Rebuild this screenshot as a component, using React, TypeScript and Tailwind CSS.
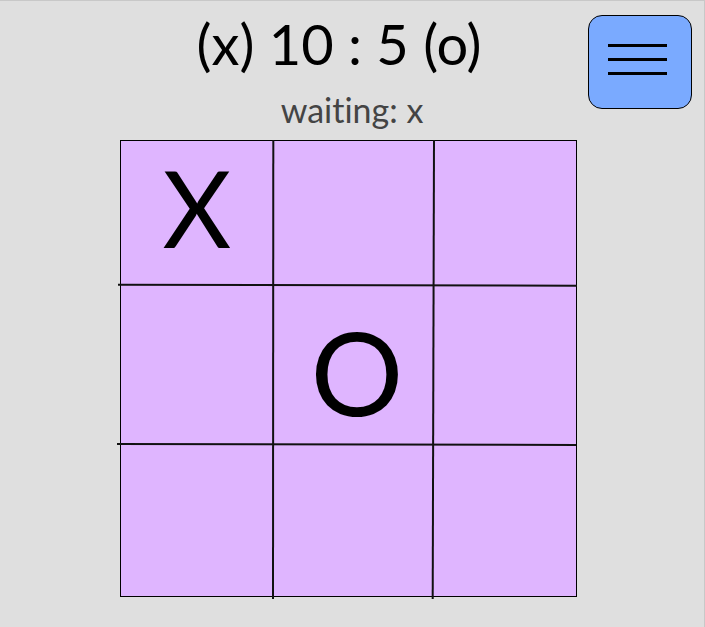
import React from "react";

type Mark = "X" | "O" | "";

const board: Mark[] = ["X", "", "", "", "O", "", "", "", ""];

const Cell = ({ mark }: { mark: Mark }) => {
  return (
    <div className="flex items-center justify-center text-black leading-none">
      {mark === "X" && <span className="text-[106px] -mt-[12px]">X</span>}
      {mark === "O" && <span className="text-[116px] mt-[14px] ml-[8px]">O</span>}
    </div>
  );
};

const App = () => {
  return (
    <div className="min-h-screen bg-[#dfdfdf] border-t border-r border-[#c8c8c8] font-['Lato','Liberation_Sans',sans-serif] [font-variant-ligatures:none] relative">
      {/* Menu button */}
      <button className="absolute top-[14px] right-[12px] w-[104px] h-[94px] bg-[#7aaaff] border border-black rounded-[14px] flex flex-col items-center justify-start pt-[28px] gap-[11px] pr-[6px]">
        <span className="block w-[59px] h-[3px] bg-black" />
        <span className="block w-[59px] h-[3px] bg-black" />
        <span className="block w-[59px] h-[3px] bg-black" />
      </button>

      {/* Score */}
      <header className="flex flex-col items-center pt-[11px]">
        <p className="text-[56px] leading-[64px] text-black pr-[26px]">(x) 10 : 5 (o)</p>
        <p className="text-[34px] leading-[40px] text-[#444] mt-[14px]">waiting: x</p>
      </header>

      {/* Board */}
      <main className="ml-[120px] mt-[10px] relative w-[457px] h-[457px] border border-black bg-[#dfb5ff]">
        <div className="grid grid-cols-[152px_160px_143px] grid-rows-[144px_159px_152px] w-full h-full">
          {board.map((m, i) => (
            <Cell key={i} mark={m} />
          ))}
        </div>
        <svg className="absolute -left-px -top-px overflow-visible pointer-events-none" width="457" height="457">
          <line x1="153.3" y1="0" x2="153" y2="459" stroke="#111" strokeWidth="2" />
          <line x1="314" y1="0" x2="312.7" y2="459" stroke="#111" strokeWidth="2" />
          <line x1="-2" y1="144.7" x2="457" y2="145.7" stroke="#111" strokeWidth="2" />
          <line x1="-3" y1="304" x2="456" y2="305" stroke="#111" strokeWidth="2" />
        </svg>
      </main>
    </div>
  );
};

export default App;
